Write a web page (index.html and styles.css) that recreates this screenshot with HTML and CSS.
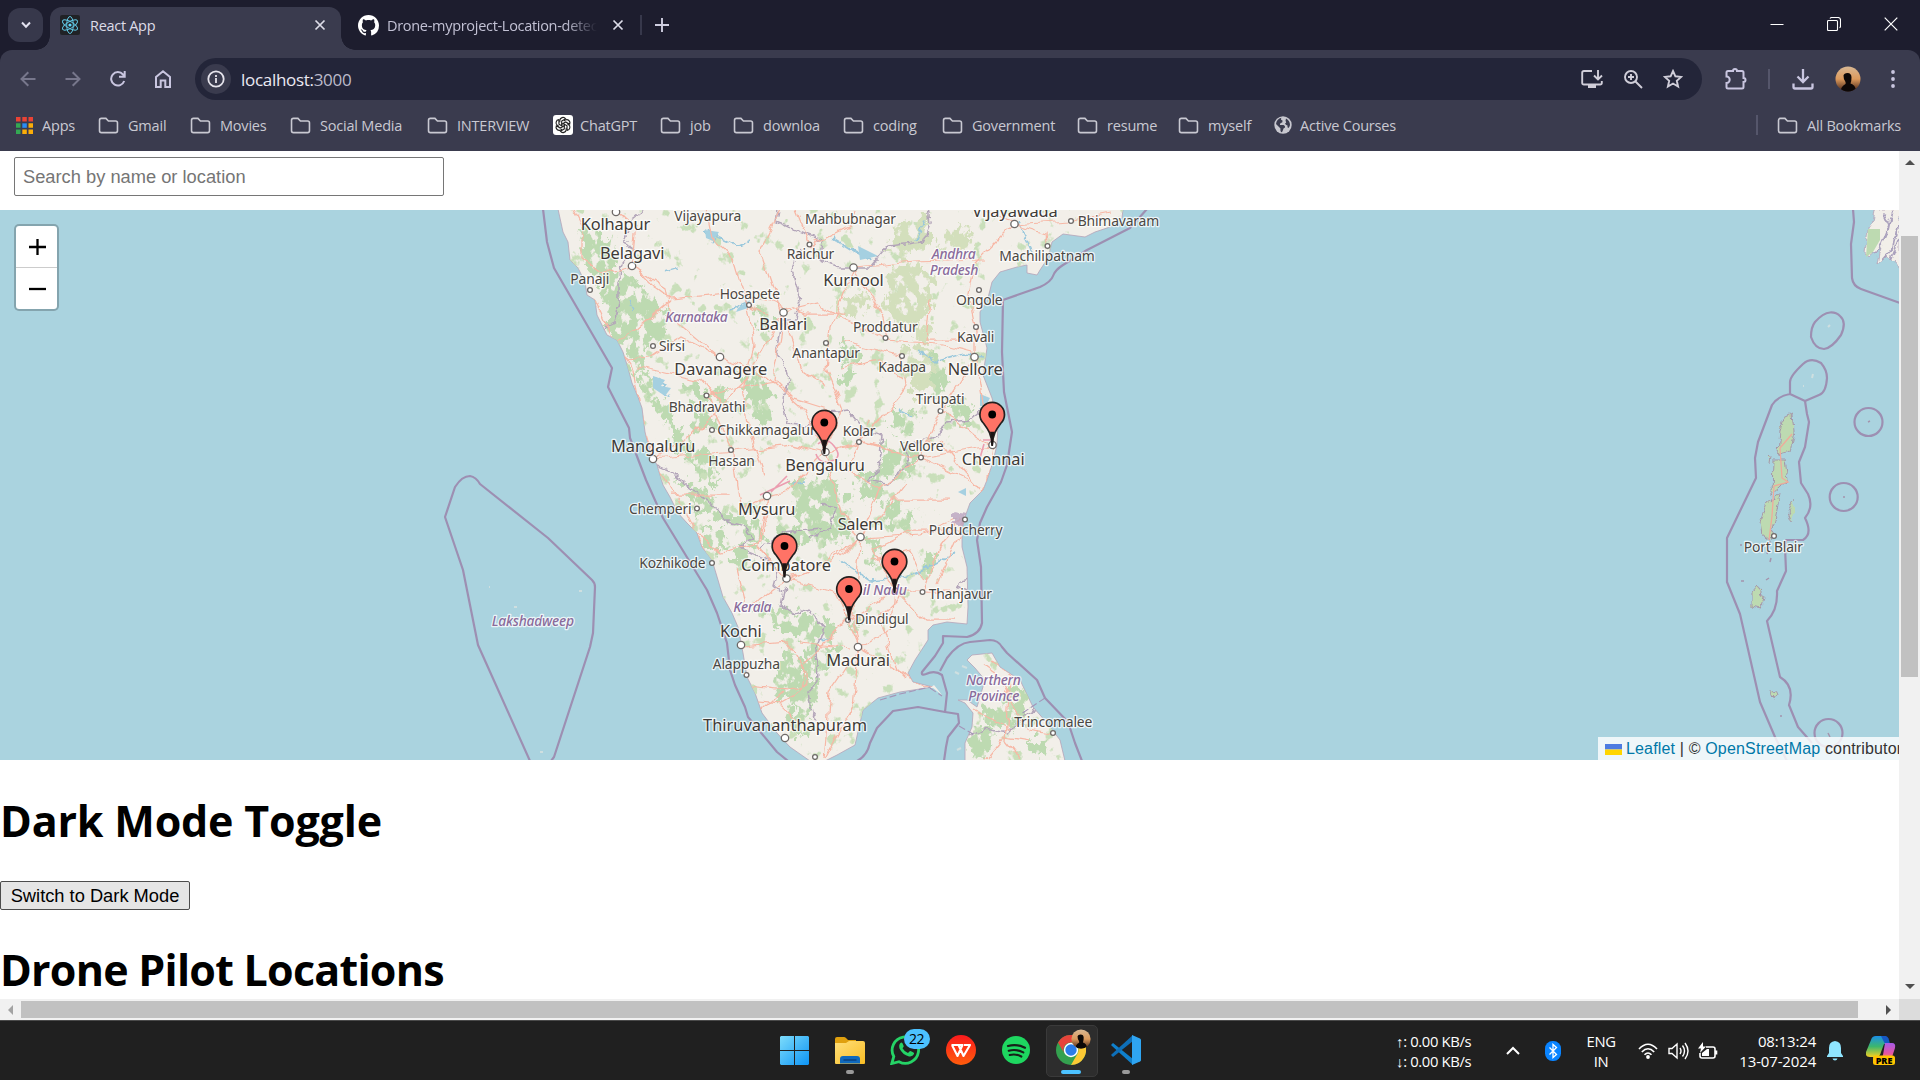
FILE: index.html
```html
<!DOCTYPE html>
<html lang="en">
<head>
<meta charset="utf-8">
<title>React App</title>
<link rel="stylesheet" href="styles.css">
</head>
<body>
<svg class="defs" width="0" height="0">
  <defs>
    <symbol id="folder" viewBox="0 0 22 18"><path d="M1.5 3.5q0-2 2-2h4.8l2.6 2.7h7.6q2 0 2 2v8.300q0 2-2 2h-15q-2 0-2-2z" fill="none" stroke="#c9c9d2" stroke-width="1.7"/></symbol>
    <symbol id="cross" viewBox="0 0 12 12"><path d="M1.500 1.500l9 9M10.500 1.500l-9 9" fill="none" stroke="currentColor" stroke-width="1.700"/></symbol>
    <symbol id="avatar" viewBox="0 0 26 26">
      <clipPath id="avclip"><circle cx="13" cy="13" r="12.500"/></clipPath>
      <g clip-path="url(#avclip)"><rect width="26" height="26" fill="url(#sunset)"/><path d="M8.500 9.500Q9 7 12.500 7q4 0 4 4.500 0 4-1 6 5 1 6 9H5.500q0-6 5-8.500.5-1.500-.5-3-1.500-2-1.500-5.500z" fill="#0d0807"/></g>
    </symbol>
    <linearGradient id="sunset" x1="0" y1="0" x2="0" y2="1"><stop offset="0" stop-color="#d8b996"/><stop offset=".5" stop-color="#dd9a5c"/><stop offset="1" stop-color="#3c1d14"/></linearGradient>
    <linearGradient id="winblue" x1="0" y1="0" x2="1" y2="1"><stop offset="0" stop-color="#7ddcfb"/><stop offset="1" stop-color="#0d94f5"/></linearGradient>
    <linearGradient id="gold" x1="0" y1="0" x2="1" y2="1"><stop offset="0" stop-color="#ffdf7a"/><stop offset="1" stop-color="#f9bd24"/></linearGradient>
    <linearGradient id="wps" x1="0" y1="0" x2="0" y2="1"><stop offset="0" stop-color="#fb1a1d"/><stop offset="1" stop-color="#ff5d0c"/></linearGradient>
    <linearGradient id="copA" x1="0" y1="0" x2="0" y2="1"><stop offset="0" stop-color="#1b8fe8"/><stop offset=".5" stop-color="#3cb76d"/><stop offset="1" stop-color="#f5cf22"/></linearGradient>
    <linearGradient id="copB" x1="0" y1="0" x2="0" y2="1"><stop offset="0" stop-color="#a65be8"/><stop offset=".6" stop-color="#e455a5"/><stop offset="1" stop-color="#ff8a4d"/></linearGradient>
  </defs>
</svg>

<div class="desktop">
  <header class="tabstrip">
    <button class="tab-search"><svg width="12" height="10" viewBox="0 0 12 10"><path d="M2 2.500l4 4.200 4-4.200" fill="none" stroke="#e3e2f0" stroke-width="2"/></svg></button>
    <div class="tab active">
      <svg class="favicon" width="20" height="20" viewBox="0 0 20 20"><rect width="20" height="20" rx="2" fill="#202226"/><g fill="none" stroke="#61c8e4" stroke-width="1"><ellipse cx="10" cy="10" rx="8.500" ry="3.300" transform="rotate(30 10 10)"/><ellipse cx="10" cy="10" rx="8.500" ry="3.300" transform="rotate(90 10 10)"/><ellipse cx="10" cy="10" rx="8.500" ry="3.300" transform="rotate(150 10 10)"/></g><circle cx="10" cy="10" r="1.600" fill="#61dafb"/></svg>
      <span class="tab-title">React App</span>
      <svg class="tab-close" width="12" height="12"><use href="#cross"/></svg>
    </div>
    <div class="tab">
      <svg class="favicon" width="21" height="21" viewBox="0 0 16 16"><path fill="#fff" d="M8 0C3.580 0 0 3.580 0 8c0 3.540 2.290 6.530 5.470 7.590.4.070.55-.17.55-.38 0-.19-.01-.82-.01-1.490-2.010.37-2.530-.49-2.690-.94-.09-.23-.48-.94-.82-1.130-.28-.15-.68-.52-.01-.53.63-.01 1.080.58 1.230.82.72 1.210 1.870.87 2.330.66.07-.52.28-.87.51-1.070-1.780-.2-3.640-.89-3.640-3.950 0-.87.31-1.590.82-2.150-.08-.2-.36-1.020.08-2.120 0 0 .67-.21 2.200.82.640-.18 1.320-.27 2-.27s1.360.09 2 .27c1.530-1.040 2.200-.82 2.200-.82.440 1.100.16 1.920.08 2.120.51.560.82 1.270.82 2.150 0 3.070-1.870 3.750-3.650 3.950.29.250.54.730.54 1.480 0 1.070-.01 1.930-.01 2.200 0 .21.15.46.55.38A8.010 8.010 0 0016 8c0-4.420-3.580-8-8-8z"/></svg>
      <span class="tab-title faded">Drone-myproject-Location-detec</span>
      <svg class="tab-close" width="12" height="12"><use href="#cross"/></svg>
    </div>
    <span class="tab-sep"></span>
    <svg class="newtab" width="14" height="14" viewBox="0 0 14 14"><path d="M7 0v14M0 7h14" stroke="#cfcee0" stroke-width="1.900"/></svg>
    <div class="winctl">
      <svg width="14" height="14" viewBox="0 0 14 14"><path d="M.5 7.500h13" stroke="#fff"/></svg>
      <svg width="14" height="14" viewBox="0 0 14 14"><path d="M1.500 3.500h8q1 0 1 1v8q0 1-1 1h-8q-1 0-1-1v-8q0-1 1-1zM3 1.500q.5-1 1.500-1H11q2.500 0 2.500 2.500v6q0 1.500-1 1.800" fill="none" stroke="#fff" stroke-width="1.100"/></svg>
      <svg width="14" height="14" viewBox="0 0 14 14"><path d="M.7.7l12.600 12.600M13.300.7L.7 13.300" stroke="#fff" stroke-width="1.200"/></svg>
    </div>
  </header>

  <div class="chrome">
    <div class="toolbar">
      <div class="tool dim"><svg width="16" height="16" viewBox="0 0 16 16"><path d="M15.500 8H1.800M8.300 1.200L1.500 8l6.800 6.800"/></svg></div>
      <div class="tool dim"><svg width="16" height="16" viewBox="0 0 16 16"><path d="M.5 8h13.700M7.700 1.200L14.500 8l-6.800 6.800"/></svg></div>
      <div class="tool"><svg width="16" height="16" viewBox="0 0 16 16"><path d="M14.200 10A6.700 6.700 0 1 1 13 3.500L14.500 5M14.700 0v5.800H9"/></svg></div>
      <div class="tool"><svg width="16" height="18" viewBox="0 0 16 18"><path d="M1 17V7l7-5.700L15 7v10h-4.700v-6.500H5.700V17z"/></svg></div>
      <div class="omnibox">
        <span class="site-info"><svg width="18" height="18" viewBox="0 0 18 18"><circle cx="9" cy="9" r="7.700" fill="none" stroke="#e6e4ec" stroke-width="1.800"/><path d="M9 8v5M9 5v1.900" stroke="#e6e4ec" stroke-width="1.800"/></svg></span>
        <span class="url">localhost:<span class="port">3000</span></span>
        <div class="omni-icons">
          <svg width="22" height="20" viewBox="0 0 22 20"><path d="M11 2H3q-1.800 0-1.800 1.800V14q0 1.500 1.800 1.500h16q1.800 0 1.800-1.500v-2" class="ln"/><path d="M7 15h8v4H7zM21 12v2" fill="#d0ced9"/><path d="M17 1v9M13 6.500l4 4 4-4" class="ln"/></svg>
          <svg width="20" height="20" viewBox="0 0 20 20"><circle cx="8" cy="8" r="6" class="ln"/><path d="M12.500 12.500l6.500 6.500M8 5v6M5 8h6" class="ln"/></svg>
          <svg width="20" height="20" viewBox="0 0 20 20"><path d="M10 2l2.400 5.300 5.800.6-4.400 3.900 1.300 5.700-5.100-3-5.100 3 1.300-5.700L1.800 7.900l5.800-.6z" class="ln"/></svg>
        </div>
      </div>
      <div class="tool ext"><svg width="22" height="22" viewBox="0 0 22 22"><path d="M1.500 4.500q0-1.500 1.500-1.500h5a2 2 0 0 1 4 0h5q1.500 0 1.500 1.500V10a2 2 0 0 1 0 4v5q0 1.500-1.500 1.500H3q-1.500 0-1.500-1.500v-4a3.200 3.200 0 0 0 0-6.400z"/></svg></div>
      <span class="tool-sep"></span>
      <div class="tool dl"><svg width="22" height="22" viewBox="0 0 22 22"><path d="M11 1v12.500M5.500 8.500L11 14l5.500-5.500M1.500 15.500V19q0 1.500 1.500 1.500h16q1.500 0 1.500-1.500v-3.500" stroke-width="2.300"/></svg></div>
      <div class="tool"><svg class="face" width="26" height="26"><use href="#avatar"/></svg></div>
      <div class="tool"><svg width="4" height="18" viewBox="0 0 4 18"><g fill="#c9c6e0" stroke="none"><circle cx="2" cy="2" r="1.900"/><circle cx="2" cy="9" r="1.900"/><circle cx="2" cy="16" r="1.900"/></g></svg></div>
    </div>

    <nav class="bookmarks">
      <a class="apps"><svg width="17" height="17" viewBox="0 0 17 17"><path fill="#ea4335" d="M0 0h4.500v4.500H0zM6.300 0h4.500v4.500H6.300zM12.500 0H17v4.500h-4.500z"/><path fill="#34a853" d="M0 6.300h4.500v4.500H0zM0 12.500h4.500V17H0z"/><path fill="#2a8cf4" d="M6.300 6.300h4.500v4.500H6.300z"/><path fill="#fbad08" d="M12.500 6.300H17v4.500h-4.500zM6.300 12.500h4.500V17H6.300zM12.500 12.500H17V17h-4.500z"/></svg>Apps</a>
      <a><svg width="21" height="17"><use href="#folder"/></svg>Gmail</a>
      <a><svg width="21" height="17"><use href="#folder"/></svg>Movies</a>
      <a><svg width="21" height="17"><use href="#folder"/></svg>Social Media</a>
      <a><svg width="21" height="17"><use href="#folder"/></svg>INTERVIEW</a>
      <a class="gpt"><svg width="20" height="20" viewBox="0 0 20 20"><rect width="20" height="20" rx="3" fill="#fff"/><g fill="none" stroke="#222" stroke-width="1.150"><path id="petal" d="M6.800 7.300V5.600a3.200 3.200 0 0 1 5.800-1.800L8.700 6.100v5"/><use href="#petal" transform="rotate(60 10 10)"/><use href="#petal" transform="rotate(120 10 10)"/><use href="#petal" transform="rotate(180 10 10)"/><use href="#petal" transform="rotate(240 10 10)"/><use href="#petal" transform="rotate(300 10 10)"/></g></svg>ChatGPT</a>
      <a><svg width="21" height="17"><use href="#folder"/></svg>job</a>
      <a><svg width="21" height="17"><use href="#folder"/></svg>downloa</a>
      <a><svg width="21" height="17"><use href="#folder"/></svg>coding</a>
      <a><svg width="21" height="17"><use href="#folder"/></svg>Government</a>
      <a><svg width="21" height="17"><use href="#folder"/></svg>resume</a>
      <a><svg width="21" height="17"><use href="#folder"/></svg>myself</a>
      <a class="globe"><svg width="18" height="18" viewBox="0 0 18 18"><circle cx="9" cy="9" r="8.700" fill="#c7c7cf"/><path d="M7.500 1.800Q6 4 8.500 4.500q.5 2-1.500 2.500-1.500.5-1 2h3.500q2 .5 1.500 2.500-2 .5-2 2.500l-1 2.300Q6 16 6.500 12.500L2 8Q2.500 3 7.500 1.800zM12 2.500q4 2 4 6.500-.5 2-1.500 3-1.500-.5-1-2.500-2-.5-2.500-2 2-1 .5-2.500z" fill="#3a3b4e"/></svg>Active Courses</a>
      <span></span>
      <a class="all"><svg width="21" height="17"><use href="#folder"/></svg>All Bookmarks</a>
    </nav>
  </div>

  <div class="viewport">
    <main class="page">
      <div class="searchrow"><input class="search" type="text" placeholder="Search by name or location"></div>
      <section class="map">
<svg class="tiles" width="1899" height="550" viewBox="0 210 1899 550">
  <defs>
    <filter id="rough" x="-5%" y="-5%" width="110%" height="110%" color-interpolation-filters="sRGB"><feTurbulence type="fractalNoise" baseFrequency=".13" numOctaves="3" seed="4"/><feDisplacementMap in="SourceGraphic" scale="7" xChannelSelector="R" yChannelSelector="G"/></filter>
    <filter id="wobble" x="-5%" y="-5%" width="110%" height="110%" color-interpolation-filters="sRGB"><feTurbulence type="fractalNoise" baseFrequency=".07" numOctaves="2" seed="9"/><feDisplacementMap in="SourceGraphic" scale="10" xChannelSelector="R" yChannelSelector="G"/></filter>
    <filter id="leaf" x="0" y="0" width="100%" height="100%" color-interpolation-filters="sRGB">
      <feTurbulence type="fractalNoise" baseFrequency=".11 .08" numOctaves="4" seed="7" result="n"/>
      <feDisplacementMap in="SourceGraphic" in2="n" scale="26" xChannelSelector="R" yChannelSelector="G" result="d"/>
      <feColorMatrix in="n" type="matrix" values="0 0 0 0 0  0 0 0 0 0  0 0 0 0 0  0 0 12 0 -4.500" result="m"/>
      <feComposite in="d" in2="m" operator="in"/>
    </filter>
    <filter id="speck" x="0" y="0" width="100%" height="100%" color-interpolation-filters="sRGB">
      <feTurbulence type="fractalNoise" baseFrequency=".07 .06" numOctaves="4" seed="21" result="n"/>
      <feColorMatrix in="n" type="matrix" values="0 0 0 0 0  0 0 0 0 0  0 0 0 0 0  0 12 0 0 -7.800" result="m"/>
      <feComposite in="SourceGraphic" in2="m" operator="in"/>
    </filter>
    <clipPath id="landclip"><use href="#india"/><use href="#lanka"/></clipPath>
    <symbol id="pin" viewBox="0 0 28 46" overflow="visible"><path d="M14 45.500C13.600 34 10 29 5.500 23A12.300 12.300 0 1 1 22.500 23C18 29 14.400 34 14 45.500z" fill="#ff7366" stroke="#23201f" stroke-width="1.700"/><circle cx="14" cy="14" r="3.900" fill="#000"/><path d="M12.700 32q1 5 1.300 13 .3-8 1.300-13z" fill="#1c1515" stroke="#1c1515" stroke-width="1.500"/></symbol>
  </defs>
  <rect y="210" width="1899" height="550" fill="#aad3df"/>
  <g fill="#f2efe9" stroke="#b5a3b8" stroke-width=".8">
    <path id="india" d="M558 209L563 232 568 242 570 260 578 268 585 282 587 295 595 300 597 315 603 327 607 335 617 340 623 352 628 368 632 383 638 397 642 408 645 432 650 452 657 465 663 485 670 497 678 513 687 523 697 533 702 547 712 560 718 580 723 597 732 613 738 627 743 653 747 677 755 693 762 713 777 733 790 747 810 761H825L837 755 855 745 860 723 863 710 878 698 900 692 933 687 913 682 908 673 915 660 928 640 928 630 933 625 947 622 967 624 968 607 967 567 962 547 962 530 965 517 970 503 983 490 987 480 992 465 997 445 998 422 992 398 983 375 987 348 980 322 980 312 988 298 992 282 1000 272 1017 267 1027 265 1027 273 1037 275 1040 270 1048 258 1052 242 1063 234 1085 237 1095 232 1110 227 1122 218 1123 209z"/>
    <path id="lanka" d="M965 761V743L972 727 973 713 965 703 958 700 967 700 977 707 980 697 985 680 975 668 967 660 972 655 992 653 1000 667 1020 680 1033 707 1047 723 1060 740 1065 761z"/>
    <path d="M1875 209L1873 222 1868 229 1865 254 1868 258 1880 247 1877 265 1888 255 1900 269V209z" filter="url(#rough)"/>
  </g>
  <path d="M990 212h130v-2H990zM930 688l4-3 8 10-9-7" fill="#f2efe9"/>
  <path d="M1868 229h12v11l-7 12-7 5z" fill="#bddab1"/>
  <path d="M1884 214l5 12-7 18-8 10M1893 211l-4 19M1897 226l-4 22-11 12M1899 240l-8 20" fill="none" stroke="#aaa1bd" stroke-width="1.800" filter="url(#rough)"/>

  <g clip-path="url(#landclip)">
    <g filter="url(#speck)"><rect x="550" y="210" width="580" height="550" fill="#c9dfba"/></g>
    <g filter="url(#leaf)" fill="#bddab1">
      <rect x="540" y="205" width="1" height="1"/><rect x="1130" y="765" width="1" height="1"/>
      <path d="M583 230l20 0 14 30 10 18 25 14 16 22-3 26-22 8-14 4-16-10-8-20 0-24-14-28-12-22z"/>
      <path d="M624 342l24 4-6 20-8 4zM634 368l16 4 8 22-16 2zM650 394l18 10 10 20 10 20 22 18 10 24-14-4-16-20-14-18-12-20z"/>
      <path d="M685 385l22 2 2 18-18-4zM712 385l14 2-2 20-14-6zM690 412l32 2-6 16-26-2zM668 430l20 6 14 20-22-2zM692 452l20-2 6 32-20-4z"/>
      <path d="M678 482l24 8 24 24 34 10 14 22-20-4-32-20-26-10zM702 526l22 6 6 20-20-2zM728 545l26 0 2 20-24-2z"/>
      <path d="M752 606l40 4 20 10-2 18-34-12zM780 650l30 14-4 46-28-12 2-26zM782 706l24 6 4 28-18-6z"/>
      <path d="M792 480l40-4 18 22 2 30-14 16-32-6-12-26zM774 528l30-2 14 10-22 14-16 2z"/>
      <path d="M856 470l26 0 2 22-20 10zM880 500l28 4 6 24-24-2zM866 540l16 4-2 26-14-6zM924 552l14 2-4 20-14-4z"/>
      <path d="M798 616l38 2-4 20-28 4zM808 642l34 6-10 20-26 2zM848 620l14 2-2 12-14-2zM796 668l22 16-2 26-16 8z"/>
      <path d="M930 352l16 6 2 40-14 0-6-24zM950 400l22 6-2 20-18 0zM896 406l22 10-12 20-16-6zM884 446l34 2-6 26-32 4zM838 340l18 4 2 20-14 2zM842 372l14 0-2 12-12-2zM752 302l18 12 0 20-16-10zM740 376l20-6 12 40-10 20-14-20z"/>
      <path d="M984 703l40-2 0 14-8 14-34-2zM972 728l20 2-2 26-22 4zM1000 684l28 4 8 20-20-6zM1030 736l22 8-6 14-14-2z"/>
    </g>
    <g filter="url(#leaf)" fill="#d3dfbc">
      <rect x="540" y="205" width="1" height="1"/><rect x="1130" y="765" width="1" height="1"/>
      <path d="M900 222l28-6 0 26-20 16-22-4zM938 234l30-8 8 20-36 6zM890 266l30-4-2 60-24 8-8-20zM920 268l14 4-4 50-14-6zM916 322l18 6-4 14-14-2zM904 340l26 10 6 42-20 4-16-30zM840 296l28 0-8 20-24 0z"/>
    </g>
    <g fill="none" stroke="#9ac8dc" stroke-width="1.500" filter="url(#rough)">
      <path d="M704 230l14 6-6 8M716 236l22 10 12-6M748 302l-18 8M852 250l20 10M925 220l-8 20M832 238l26 16M653 378l14 6-6 8 10 4M900 410l12 6M918 350l16 12 30-8 20 2M840 560l30 20 40-4 24-12 22-12M1018 222l14 30M985 395l-4 14M793 484l12-2M820 640l12-2M630 300l4 12M665 272l14-4"/>
    </g>
    <path d="M653 376l12 4-4 6 10 2-6 8-12-8zM705 230l14 2-6 9-7-3zM738 308l12-8-2 8-12 4zM858 246l20 10-18 4zM980 394l10 4-4 8-6 0zM958 492l8-4 0 8z" fill="#a5d0e1"/>
    <g fill="none" stroke="#b3a5b9" stroke-width="1.500" filter="url(#rough)">
      <path d="M645 209l-12 10-8 20 8 12-12 16-2 10 0 26-4 20-12 6M800 250l-8 20 8 30-4 20-14 0-6 30 10 18 4 12-6 14-2 10 6 20 20 2 20-14 20-2 16 20 18 6-4 34-10 12 20 2 8-10 12-8-2-20 32-10 8-14 24-2 20-16"/>
      <path d="M778 210l-2 12 20 8 26 10-2 20 20 8 30 0 18-22 34-4 8-18-2-18 16-2M656 466l18 8 10 10 24 16 20 22 18 6 8 12-14 6 8 6 20 8 10 12-4 14 8 6 4-6-4 20 12 8 14-4 16 18-8 22 2 30-10 12 4 20 6 8M820 504l16 4-6 20-20 10M820 528l-36 4-24 16"/>
      <path d="M970 579l-10 2-2 6 8 4M960 727l14 8 10-6 24 4 20-20 20-10"/>
    </g>
    <g fill="none" stroke="#f7b7a5" stroke-width="1.250" filter="url(#wobble)">
      <path d="M572 209l10 20 0 30 20 15 32-8 20 20 16 12 60-6 40 8 34 14 44 0M632 266l4-40-18-14M632 266l34 22 6 30 48 40 46 18 34 30 26 46M672 300l-36 30-22 12-20-44M614 340l20 30 10 60 8 28 28 44 30 60 18 60 10 40 12 40 38 60 36 20M653 459l80-8 60-6 32 8M653 459l40-24 30-30-20-24-64-14M706 396l30-8 40-6M720 357l-40-20-30 20-26 2"/>
      <path d="M706 209l6 30 22 20 14 46 6 40-10 40 4 40 16 50M780 209l-20 40 20 60 2 20-8 50 20 20 32 10M810 245l40-20 4-16M810 245l-16-40M854 268l-24 60-4 40 16 40-18 44M854 268l60-6 70-2M854 268l30 50 4 22 50 4 38 10M886 338l-40-16-28-18-34 8M902 356l4 30-24 34-24 22-34 10M902 356l-60-16"/>
      <path d="M1014 224l-40 40-6 30 8 36 0 30 8 50 10 34M1014 224l32 10 2 14M1014 224l-30-14M1014 224l56-4 40-8M975 358l-34 52-20 48-60-16M941 411l32 24 20 12M921 458l70-12M993 446l-6 38-24 40-26 60M921 458l-40 30-20 48-8 80 6 30-6 60-28 52M921 458l50 24M825 452l40-10 56 16"/>
      <path d="M825 452l-40 40-18 4-8 50 26 32 20-4 56-36M825 452l16 60 20 26 60-4 40-16M861 538l-30 24-44 18-26-30M787 579l-40 30-10-40M787 579l50 14 12 28 46-30 28 0 20-50 20-22M894 590l-20-40 40-20 50 0M894 590l-4 40-30 18-30 44-6 66M894 590l30 30 30 0M848 620l12 28 50 30 20 10M848 620l-40 40-6 30-24 14M742 646l46-4 20 30 0 14-20 4-40-4M850 648l-50-6M740 700l40 4 20 20M762 712l20-20"/>
      <path d="M732 450l-12-24-10-30M732 450l10 60 26-14M768 496l-6 46-40 10-26-20M670 495l60 0M783 313l20 60 24 14M783 313l-40 70-20 20M749 305l20 12M840 368l40-8 22 20M930 300l-4 40 50 0M868 420l-20 50 34 20M940 440l40 50M875 525l30-40M870 560l40-10 14 32M890 500l60 0M900 596l-20 20 14 50 14 14M926 592l38 0"/>
      <path d="M984 664l14 10 14 30 16 26 24 4M992 662l20 14M1010 680l-4 60 16 20M972 710l40 20M985 760l20-24 24 4"/>
    </g>
    <path d="M818 444q8-8 16 2t0 14q-14 6-18-6M983 440h10M984 444l-4 14M760 495l30-14M771 492l16-16" fill="none" stroke="#ec9cb0" stroke-width="1.600"/>
    <path d="M952 512l14 2-2 12-12-2z" fill="#b9a3c0" opacity=".8" filter="url(#rough)"/>
  </g>
  <path d="M880 700l20-6 30-7M930 688l12 8M1045 698l-24 16M959 726l14 8" fill="none" stroke="#a495b8" stroke-width="1.100" stroke-dasharray="7 3"/>
  <path d="M955 672l4 2M962 666l5 2M957 750l4-2M489 587h1M514 607h3M579 591h3M540 752h3M1828 327l2-2M1812 378l1-4M1803 386h1" stroke="#cfdfe0" stroke-width="2"/>

  <g filter="url(#rough)" fill="#bddab1" stroke="#a596a8" stroke-width="1">
    <path d="M1792 414L1784 418 1780 430 1778 454 1790 451 1794 432zM1773 460L1785 460 1788 480 1772 494zM1767 503L1780 494 1775 520 1770 540 1762 534 1760 522zM1752 592L1758 585 1764 598 1760 609 1752 607zM1771 692l5-1 2 5-5 2zM1768 455l2 2-1 6M1795 498l-4 8-3 6 4 10"/>
  </g>
  <path d="M1792 434l-12 14 2 30 6 4-14 4-2 30-3 24" fill="none" stroke="#efaa9b" stroke-width="1.300"/>
  <path d="M1770 541l-3 13M1771 558l-1 4M1740 545l2 0M1741 581h3M1766 580l3-2M1868 422l2-1M1843 497h2M1828 733l2 4M1780 716h2" stroke="#a494ad" stroke-width="1.500"/>

  <g fill="none" stroke="#9d8fb2" stroke-width="2.200" stroke-linejoin="round">
    <path d="M543 209L547 242 554 268 612 368 608 387 629 428 630 438 646 480 663 518 707 590 717 613 727 643 730 670 735 685 745 707 748 717 777 752 788 761"/>
    <path d="M530 761L478 645 463 570 445 517 455 487Q462 476 470 476 476 477 480 484L548 538 592 580Q595 583 595 587L593 633 590 647 554 757 551 761"/>
    <path d="M1147 209L1130 228 1087 250 1063 265Q1055 270 1053 276T1040 287L1003 300 1002 352 1004 392 1012 432 1007 465 1001 482 987 507 980 523 977 540 981 567 982 623Q980 634 967 637L943 636 943 643 935 656 922 672Q921 676 926 674 935 670 942 675L947 693 945 712 918 707 893 711 877 728 870 743Q867 756 857 761"/>
    <path d="M940 671L947 658Q958 643 970 642L990 640Q998 640 1002 647L1007 653 1037 680 1045 698 1068 722 1075 743 1082 761M945 712L958 714 959 723 948 737 946 747 944 761"/>
    <path d="M1853 209L1854 222 1851 244 1852 278Q1853 286 1861 289L1900 303"/>
    <path d="M1830 312.500Q1823 313 1815 322 1811 327 1811 337 1815 349 1824 349 1832 348 1841 335 1847 322 1840 316 1836 312 1830 312.500z"/>
    <path d="M1790 394V382Q1790 376 1803 364 1811 357 1821 363 1827 370 1827 378 1826 393 1819 395L1805 401 1790 394Q1778 396 1772 405L1758 442 1755 458 1756 478 1727 538 1727 582 1740 614 1760 702 1775 737 1787 761"/>
    <path d="M1805 401L1807 414 1809 422 1805 447 1799 462 1801 483 1808 494Q1814 507 1805 518 1813 534 1803 540H1786L1785 547 1786 571 1777 591Q1778 610 1767 621L1780 677Q1795 686 1789 705L1798 727 1812 743"/>
    <circle cx="1868.500" cy="422" r="14"/><circle cx="1843.700" cy="497" r="14"/><circle cx="1828.500" cy="733" r="14"/>
  </g>

  <g fill="#fff" stroke="#6e6a68" stroke-width="1.300">
    <g class="big"><circle cx="616" cy="212" r="3.700"/><circle cx="632" cy="266" r="3.700"/><circle cx="720" cy="357" r="3.700"/><circle cx="653" cy="459" r="3.700"/><circle cx="783.500" cy="312.500" r="3.700"/><circle cx="853.500" cy="267.500" r="3.700"/><circle cx="1014.500" cy="224" r="3.700"/><circle cx="974.500" cy="357" r="3.700"/><circle cx="992.500" cy="445" r="3.700"/><circle cx="825.500" cy="452" r="3.700"/><circle cx="767" cy="496" r="3.700"/><circle cx="786.500" cy="578.500" r="3.700"/><circle cx="741" cy="645" r="3.700"/><circle cx="785" cy="738" r="3.700"/><circle cx="860.500" cy="537" r="3.700"/><circle cx="858" cy="647" r="3.700"/></g>
    <g><circle cx="749" cy="305" r="2.400"/><circle cx="590" cy="290" r="2.400"/><circle cx="653" cy="346" r="2.400"/><circle cx="706.500" cy="395.500" r="2.400"/><circle cx="712" cy="430" r="2.400"/><circle cx="731" cy="450" r="2.400"/><circle cx="809.500" cy="244.500" r="2.400"/><circle cx="1071" cy="221" r="2.400"/><circle cx="1047.500" cy="246" r="2.400"/><circle cx="979" cy="290" r="2.400"/><circle cx="885.500" cy="338" r="2.400"/><circle cx="976" cy="327" r="2.400"/><circle cx="902" cy="356" r="2.400"/><circle cx="826" cy="343" r="2.400"/><circle cx="940.500" cy="411" r="2.400"/><circle cx="859" cy="442" r="2.400"/><circle cx="921" cy="457.500" r="2.400"/><circle cx="697" cy="508.500" r="2.400"/><circle cx="712" cy="563" r="2.400"/><circle cx="746.500" cy="675" r="2.400"/><circle cx="965" cy="519.500" r="2.400"/><circle cx="922.500" cy="592" r="2.400"/><circle cx="848" cy="620" r="2.400"/><circle cx="1053" cy="733" r="2.400"/><circle cx="815" cy="757" r="2.400"/><circle cx="1774" cy="536" r="2.400"/></g>
  </g>

  <g class="city major">
    <text x="580.700" y="230" textLength="69.500">Kolhapur</text><text x="600" y="259" textLength="64.500">Belagavi</text><text x="759.300" y="330.500" textLength="48">Ballari</text><text x="674.300" y="375.700" textLength="93">Davanagere</text><text x="611" y="452" textLength="84.500">Mangaluru</text><text x="785.300" y="471.700" textLength="79.700">Bengaluru</text><text x="972.300" y="217" textLength="85.500">Vijayawada</text><text x="823.300" y="286.300" textLength="60.500">Kurnool</text><text x="947.700" y="375.700" textLength="55">Nellore</text><text x="961.700" y="465.300" textLength="63">Chennai</text><text x="738" y="515" textLength="57.300">Mysuru</text><text x="741" y="571.700" textLength="90">Coimbatore</text><text x="720" y="637.700" textLength="41.700">Kochi</text><text x="703" y="731.700" textLength="164">Thiruvananthapuram</text><text x="837.700" y="530" textLength="45.700">Salem</text><text x="826.300" y="666.700" textLength="63.700">Madurai</text>
  </g>
  <g class="city">
    <text x="674.300" y="221.500" textLength="67">Vijayapura</text><text x="570.300" y="284" textLength="39">Panaji</text><text x="719.700" y="299" textLength="60.500">Hosapete</text><text x="659" y="351.700" textLength="26">Sirsi</text><text x="792.300" y="358.700" textLength="67.700">Anantapur</text><text x="668.700" y="412.300" textLength="77">Bhadravathi</text><text x="717.300" y="435.700" textLength="107">Chikkamagaluru</text><text x="708.300" y="466" textLength="46.500">Hassan</text><text x="805" y="224.300" textLength="91">Mahbubnagar</text><text x="1077.700" y="226.300" textLength="81.500">Bhimavaram</text><text x="999.300" y="261" textLength="95.500">Machilipatnam</text><text x="786.700" y="259.300" textLength="47.600">Raichur</text><text x="956" y="305" textLength="46.700">Ongole</text><text x="853" y="332" textLength="64.700">Proddatur</text><text x="957" y="342.700" textLength="37.300">Kavali</text><text x="878.300" y="372" textLength="47.700">Kadapa</text><text x="915.700" y="404.700" textLength="49">Tirupati</text><text x="842.700" y="436.700" textLength="32.700">Kolar</text><text x="900" y="451.300" textLength="43.700">Vellore</text><text x="629" y="514" textLength="62.700">Chemperi</text><text x="639.300" y="568.700" textLength="66.300">Kozhikode</text><text x="712.700" y="669" textLength="67.300">Alappuzha</text><text x="928.700" y="535.700" textLength="74">Puducherry</text><text x="928.700" y="599" textLength="63.300">Thanjavur</text><text x="855" y="624.700" textLength="53.700">Dindigul</text><text x="1014.300" y="727" textLength="78">Trincomalee</text><text x="1743.700" y="552" textLength="59.300">Port Blair</text>
  </g>
  <g class="city state">
    <text x="665.300" y="322.700" textLength="62.500">Karnataka</text><text x="931.700" y="259.300" textLength="44">Andhra</text><text x="929.700" y="275.300" textLength="48.700">Pradesh</text><text x="733.300" y="612.300" textLength="38.300">Kerala</text><text x="491.700" y="626" textLength="82.300">Lakshadweep</text><text x="837" y="595" textLength="70">Tamil Nadu</text><text x="966" y="685" textLength="55">Northern</text><text x="968.300" y="701" textLength="51">Province</text>
  </g>
  <use href="#pin" x="810.300" y="408.500" width="28" height="46"/><use href="#pin" x="978.200" y="400.500" width="28" height="46"/><use href="#pin" x="770.500" y="532" width="28" height="46"/><use href="#pin" x="880.500" y="547.500" width="28" height="46"/><use href="#pin" x="835" y="575" width="28" height="46"/>
</svg>
        <div class="zoomctl"><a><svg width="18" height="18" viewBox="0 0 18 18"><path d="M9.500 1v16M1 9h17" stroke="#000" stroke-width="2.300"/></svg></a><a><svg width="18" height="18" viewBox="0 0 18 18"><path d="M1 9h17" stroke="#000" stroke-width="2.300"/></svg></a></div>
        <div class="attribution"><svg width="17" height="11" viewBox="0 0 17 11"><path fill="#4c7be1" d="M0 0h17v5.500H0z"/><path fill="#ffd500" d="M0 5.500h17V11H0z"/></svg><a>Leaflet</a> | © <a>OpenStreetMap</a> contributors</div>
      </section>
      <h1 class="dark-title">Dark Mode Toggle</h1>
      <button class="switch">Switch to Dark Mode</button>
      <h1 class="pilot-title">Drone Pilot Locations</h1>
    </main>
    <div class="vbar"><i class="arrow up"></i><i class="vthumb"></i><i class="arrow down"></i></div>
    <div class="hbar"><i class="arrow left"></i><i class="hthumb"></i><i class="arrow right"></i></div>
    <div class="corner"></div>
  </div>

  <footer class="taskbar">
    <div class="apps-row">
      <div class="app"><svg width="29" height="29" viewBox="0 0 29 29"><path fill="url(#winblue)" d="M1 0h13v14H0V1zM15 0h13l1 1v13H15zM0 15h14v14H1l-1-1zM15 15h14v13l-1 1H15z"/></svg></div>
      <div class="app run"><svg width="30" height="27" viewBox="0 0 30 27"><path fill="#e0a00e" d="M0 2q0-2 2-2h7q1 0 2 1l2 2h8v5H0z"/><path fill="url(#gold)" d="M0 6h11l3-2h14q2 0 2 2v20q0 1-1 1H1q-1 0-1-1z"/><path fill="#0f69bd" d="M5 26.500v-4.500q0-3 3-3h14q3 0 3 3v4.500z"/><path d="M8.500 23h13" stroke="#0a3f7d" stroke-width="1.400"/></svg></div>
      <div class="app"><svg width="30" height="30" viewBox="0 0 30 30"><path d="M1.800 28.500l2-7A13.200 13.200 0 1 1 9 26.700z" fill="none" stroke="#25d366" stroke-width="2.800"/><path d="M10.500 8q1-1 2 .3l1.200 2.700q.2.800-1.200 2.300 2 3.500 5.500 4.800l1.700-1.800q.6-.5 1.300-.1l2.500 1.300q.9.500.5 1.600-1.500 3-5 2.300-6.500-1.700-9.500-8-1-3.500 1-5.400z" fill="#25d366"/></svg><span class="badge">22</span></div>
      <div class="app"><svg width="30" height="30" viewBox="0 0 30 30"><circle cx="15" cy="15" r="15" fill="url(#wps)"/><path d="M5.500 10h7.500M6 10l5.500 11 5-11h-4l5 11 6.500-11h-6" fill="none" stroke="#fff" stroke-width="2.100" stroke-linejoin="round"/></svg></div>
      <div class="app"><svg width="28" height="28" viewBox="0 0 28 28"><circle cx="14" cy="14" r="14" fill="#1ed760"/><path d="M6 10q8.500-2.500 17 1.700M6.800 14.700q7.500-2 14.500 1.700M7.800 19q6-1.500 11.500 1.500" fill="none" stroke="#172019" stroke-width="2.200" stroke-linecap="round"/></svg></div>
      <div class="app current"><svg width="30" height="30" viewBox="0 0 30 30"><circle cx="15" cy="15" r="15" fill="#34a14f"/><path d="M2 7.500A15 15 0 0 1 28 7.500H15a7.500 7.500 0 0 0-6.500 11.300z" fill="#e6433a"/><path d="M28 7.500A15 15 0 0 1 15 30l6.500-11.300A7.500 7.500 0 0 0 15 7.500z" fill="#fcc934"/><circle cx="15" cy="15" r="7.200" fill="#fff"/><circle cx="15" cy="15" r="5.700" fill="#2b7de9"/></svg><svg class="who" width="20" height="20"><use href="#avatar"/></svg></div>
      <div class="app run"><svg width="30" height="30" viewBox="0 0 30 30"><path d="M0 10l2-2L22 24v6L1 11z" fill="#0f80cc"/><path d="M0 20l2 2L22 6V0L1 19z" fill="#0e6fb8"/><path d="M21 0l8 3.500q1 .5 1 1.500v20q0 1-1 1.500L21 30z" fill="#2fa5f2"/></svg></div>
    </div>
    <div class="tray">
      <div class="net">↑: 0.00 KB/s<br>↓: 0.00 KB/s</div>
      <svg class="i-chev" width="14" height="9" viewBox="0 0 14 9"><path d="M1 8l6-6 6 6" fill="none" stroke="#fff" stroke-width="2"/></svg>
      <svg class="i-bt" width="16" height="20" viewBox="0 0 16 20"><rect width="16" height="20" rx="7.500" fill="#0a84ff"/><path d="M4.500 6.500l7 7L8 16.500v-13l3.500 3-7 7" fill="none" stroke="#fff" stroke-width="1.300"/></svg>
      <div class="lang">ENG<br>IN</div>
      <svg class="i-wifi" width="20" height="16" viewBox="0 0 20 16"><g fill="none" stroke="#fff" stroke-width="1.600"><path d="M1 6q9-9.500 18 0M3.800 9q6.200-6.500 12.400 0M6.500 11.800q3.500-3.600 7 0"/></g><circle cx="10" cy="14" r="1.900" fill="#fff"/></svg>
      <svg class="i-vol" width="21" height="18" viewBox="0 0 21 18"><g fill="none" stroke="#fff" stroke-width="1.400"><path d="M1 6.500h3l5-4.500v14l-5-4.500H1zM12 6q2 3 0 6M14.500 3.500q4 5.500 0 11M17 1q6 8 0 16"/></g></svg>
      <svg class="i-bat" width="20" height="18" viewBox="0 0 20 18"><path d="M8 5h7q2 0 2 2v7q0 2-2 2H4q-2 0-2-2v-3M18.500 8.500v4" fill="none" stroke="#fff" stroke-width="1.600"/><path d="M4 14v-3l5-4h2v7zM5 0L0 6.500h3L2 11l6-6.500H5z" fill="#fff"/></svg>
      <div class="clock">08:13:24<br>13-07-2024</div>
      <svg class="i-bell" width="16" height="20" viewBox="0 0 16 20"><path d="M8 0q6 .5 6 7v5l2 3v1H0v-1l2-3V7q0-6.500 6-7zM5.500 17.500h5q-.5 2-2.500 2t-2.500-2z" fill="#8fe5ff"/></svg>
      <svg class="i-cop" width="30" height="29" viewBox="0 0 30 29"><path d="M5 4q1-4 5-4h8q3 0 4 4l1 4h-5l-3 8q-1 5-5 5H4q-5 0-4-5z" fill="url(#copA)"/><path d="M15 0h4q3 0 4 4l1 4h-5z" fill="#1658c4"/><path d="M19 7h7q4 0 3 5l-3 9q-1 3-5 3h-9q4-1 5-5z" fill="url(#copB)"/><rect x="7" y="19.500" width="22" height="9.500" rx="2.500" fill="#ffc400"/><text x="18" y="27.500" class="pre">PRE</text></svg>
    </div>
  </footer>
</div>
</body>
</html>
```
FILE: styles.css
```css
* { box-sizing: border-box; }
body { margin: 0; overflow: hidden; font-family: "Open Sans", "Noto Sans", sans-serif; }
.defs { position: absolute; }
.desktop { width: 1920px; height: 1080px; display: flex; flex-direction: column; overflow: hidden; background: #1d1d2e; }
svg { flex: none; }
button { margin: 0; padding: 0; }

/* tab strip */
.tabstrip { height: 50px; display: flex; align-items: flex-start; padding: 7px 22px 0 8px; color: #dddce8; background: #1d1d2e; }
.tab-search { width: 35px; height: 34px; margin: 1px 7px 0 0; border: 0; border-radius: 12px; background: #37384b; display: grid; place-items: center; }
.tab { display: flex; align-items: center; height: 36px; width: 290px; padding: 0 7px 0 17px; font-size: 14.500px; }
.tab.active { position: relative; height: 43px; width: 291px; padding: 0 15px 7px 10px; background: #3a3b4e; border-radius: 12px 12px 0 0; }
.tab.active::before, .tab.active::after { content: ""; position: absolute; bottom: 0; width: 14px; height: 14px; }
.tab.active::before { left: -14px; background: radial-gradient(circle at 0 0, transparent 13.500px, #3a3b4e 14px); }
.tab.active::after { right: -14px; background: radial-gradient(circle at 100% 0, transparent 13.500px, #3a3b4e 14px); }
.tab-title { flex: 1; margin-left: 8px; white-space: nowrap; overflow: hidden; letter-spacing: -.3px; }
.active .tab-title { margin-left: 10px; }
.tab-title.faded { flex: none; width: 210px; color: #c2c1d4; mask-image: linear-gradient(90deg, #000 85%, transparent); }
.tab-close { margin-left: auto; }
.tab-sep { width: 2px; height: 20px; margin: 8px 13px 0 9px; background: #37384b; }
.newtab { margin-top: 11px; }
.winctl { margin-left: auto; margin-top: 10px; display: flex; gap: 43px; }

/* toolbar */
.chrome { height: 101px; background: #3a3b4e; border-radius: 12px 12px 0 0; }
.toolbar { height: 58px; display: flex; align-items: center; padding: 0 5px 0 5.500px; }
.tool { flex: none; width: 45px; display: grid; place-items: center; }
.tool svg { fill: none; stroke: #c9c6e0; stroke-width: 2; }
.tool svg.face { stroke: none; }
.tool.dim svg { stroke: #77778c; }
.omnibox { flex: none; width: 1507px; height: 42px; margin-left: 9.500px; padding: 0 19px 0 6px; border-radius: 21px; background: #232539; display: flex; align-items: center; }
.site-info { width: 30px; height: 30px; border-radius: 50%; background: #3a3b4e; display: grid; place-items: center; }
.url { margin-left: 10px; font-size: 17px; letter-spacing: -.3px; color: #ebeaf3; }
.port { color: #bcbbca; }
.omni-icons { margin-left: auto; display: flex; gap: 20px; align-items: center; }
.ln { fill: none; stroke: #d0ced9; stroke-width: 1.900; }
.tool.ext { width: 50px; margin-left: 9px; }
.tool-sep { width: 2px; height: 20px; margin: 0 10px 0 7px; background: #55566b; }

/* bookmarks */
.bookmarks { height: 36px; margin-top: -1px; padding-left: 16px; display: grid; grid-template-columns: 82px 92px 100px 137px 126px 107px 73px 110px 99px 135px 101px 96px 180px 1fr 164px; align-items: center; color: #c9c9d2; font-size: 14.500px; letter-spacing: -.2px; white-space: nowrap; }
.bookmarks a { display: flex; align-items: center; gap: 9px; }
.bookmarks .gpt { gap: 7px; }
.bookmarks .globe { gap: 8px; }
.bookmarks .all { border-left: 2px solid #55566b; height: 20px; padding-left: 19px; }

/* page area */
.viewport { flex: none; height: 869px; display: grid; grid-template: 848px 21px / 1899px 21px; background: #fff; }
.page { overflow: hidden; background: #fff; color: #000; }
.searchrow { height: 59px; padding: 6px 14px; }
.search { display: block; width: 430px; height: 39px; border: 1px solid #767676; border-radius: 2px; padding: 1px 8px 0; background: #fff; font: 18.300px "Liberation Sans", Arial, sans-serif; outline: 0; }
.search::placeholder { color: #757575; }
.map { position: relative; height: 550px; overflow: hidden; background: #aad3df; }
.tiles { display: block; }
.city { font-family: "Noto Sans", sans-serif; font-size: 13.900px; fill: #4b4743; stroke: rgba(255, 255, 255, .75); stroke-width: 2.500px; paint-order: stroke; stroke-linejoin: round; transform: translateY(-.5px); }
.city.major { font-size: 16.400px; fill: #3e3a37; }
.city.state { font-style: italic; fill: #8a6c9c; font-weight: 500; }
.zoomctl { position: absolute; left: 14px; top: 14px; width: 45px; height: 87px; border: 2px solid rgba(0, 0, 0, .22); border-radius: 5px; background: #fff; background-clip: padding-box; display: grid; grid-template-rows: 42px 41px; }
.zoomctl a { display: grid; place-items: center; }
.zoomctl a:first-child { border-bottom: 1px solid #ccc; }
.attribution { position: absolute; left: 1598px; bottom: 0; width: 330px; height: 23px; padding-left: 7px; line-height: 23px; background: rgba(255, 255, 255, .8); font-family: "Liberation Sans", Arial, sans-serif; font-size: 16px; letter-spacing: .16px; color: #333; white-space: nowrap; }
.attribution svg { margin-right: 4px; vertical-align: -1px; }
.attribution a { color: #0078a8; }
h1 { margin: 0; font-size: 43px; line-height: 60px; font-weight: 700; white-space: nowrap; }
.dark-title { margin-top: 31px; letter-spacing: -.18px; }
.switch { display: block; width: 190px; height: 29px; margin-top: 30px; border: 1px solid #4c4c4c; border-radius: 2px; background: #e5e5e5; color: #000; font: 18.300px "Liberation Sans", Arial, sans-serif; }
.pilot-title { margin-top: 30px; letter-spacing: -.75px; }

.vbar { background: #f1f1f1; display: flex; flex-direction: column; align-items: center; }
.vthumb { width: 17px; height: 441px; margin-top: 71px; background: #c1c1c1; }
.arrow { width: 0; height: 0; border: 5px solid transparent; }
.arrow.up { margin-top: 4px; border-bottom-color: #505050; }
.arrow.down { margin-top: auto; margin-bottom: 5px; border-top-color: #505050; }
.hbar { background: #f1f1f1; display: flex; align-items: center; }
.arrow.left { margin-left: 3px; border-right-color: #a3a3a3; }
.hthumb { width: 1837px; height: 17px; margin-left: 8px; background: #c1c1c1; }
.arrow.right { margin-left: 28px; border-left-color: #505050; }
.corner { background: #dcdcdc; }

/* taskbar */
.taskbar { flex: none; height: 60px; border-top: 1px solid #4a4a4a; background: #202020; display: flex; color: #fff; }
.apps-row { display: flex; margin-left: 767px; padding-top: 4px; }
.app { position: relative; width: 55.300px; height: 50px; display: grid; place-items: center; }
.app.run::after { content: ""; position: absolute; bottom: 1px; width: 8px; height: 4px; border-radius: 2px; background: #9a9a9a; }
.badge { position: absolute; left: 26px; top: 4px; width: 26px; height: 20px; border-radius: 10px; background: #4cc2ff; color: #000; font-size: 14px; line-height: 20px; text-align: center; letter-spacing: -.3px; }
.current::before { content: ""; position: absolute; left: 2.500px; top: 0; width: 50px; height: 50px; border: 1px solid #3a3a3a; border-radius: 5px; background: #2d2d2d; }
.current svg { position: relative; }
.current .who { position: absolute; left: 28px; top: 4px; }
.current::after { content: ""; position: absolute; bottom: 1px; width: 20px; height: 4px; border-radius: 2px; background: #4cc2ff; }
.tray { margin-left: 242px; display: grid; grid-template-columns: 110px 39px 36px 57px 30px 30px 35px 94px 39px 32px; align-items: center; font-size: 14.800px; line-height: 20px; letter-spacing: -.35px; white-space: nowrap; }
.lang { width: 40px; text-align: center; }
.clock { width: 83px; text-align: right; font-size: 15px; letter-spacing: -.15px; }
.pre { font-family: "Open Sans", sans-serif; font-size: 9px; font-weight: 800; text-anchor: middle; letter-spacing: 0; }
```
